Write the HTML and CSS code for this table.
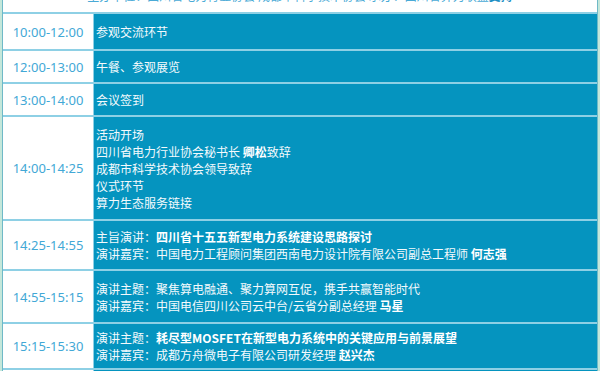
FILE: index.html
```html
<!DOCTYPE html>
<html lang="zh-CN">
<head>
<meta charset="utf-8">
<title>议程</title>
<link rel="stylesheet" href="styles.css">
</head>
<body>
<div class="page">
  <div class="schedule">
    <div class="head">主办单位：四川省电力行业协会 成都市科学技术协会 承办：四川省算力联盟 <b>支持</b></div>

    <div class="time">10:00-12:00</div>
    <div class="item"><p>参观交流环节</p></div>

    <div class="time">12:00-13:00</div>
    <div class="item"><p>午餐、参观展览</p></div>

    <div class="time">13:00-14:00</div>
    <div class="item"><p>会议签到</p></div>

    <div class="time">14:00-14:25</div>
    <div class="item">
      <p>活动开场</p>
      <p>四川省电力行业协会秘书长 <b>卿松</b>致辞</p>
      <p>成都市科学技术协会领导致辞</p>
      <p>仪式环节</p>
      <p>算力生态服务链接</p>
    </div>

    <div class="time">14:25-14:55</div>
    <div class="item">
      <p>主旨演讲：<b>四川省十五五新型电力系统建设思路探讨</b></p>
      <p>演讲嘉宾：中国电力工程顾问集团西南电力设计院有限公司副总工程师 <b>何志强</b></p>
    </div>

    <div class="time">14:55-15:15</div>
    <div class="item">
      <p>演讲主题：聚焦算电融通、聚力算网互促，携手共赢智能时代</p>
      <p>演讲嘉宾：中国电信四川公司云中台/云省分副总经理 <b>马星</b></p>
    </div>

    <div class="time">15:15-15:30</div>
    <div class="item">
      <p>演讲主题：<b>耗尽型MOSFET在新型电力系统中的关键应用与前景展望</b></p>
      <p>演讲嘉宾：成都方舟微电子有限公司研发经理 <b>赵兴杰</b></p>
    </div>

    <div class="time"></div>
    <div class="item"></div>
  </div>
</div>
</body>
</html>
```

FILE: styles.css
```css
html, body {
  margin: 0;
  padding: 0;
}

body {
  font-family: "Noto Sans CJK SC", "Noto Sans", sans-serif;
  background: #ffffff;
}

.page {
  width: 600px;
  height: 371px;
  overflow: hidden;
  display: flex;
  padding: 0 2px;
  box-sizing: border-box;
  background: #c4e7da;
}

.schedule {
  flex: 1;
  display: grid;
  grid-template-columns: 90px 1fr;
  grid-template-rows: 12px 35px 31px 31px 102px 48px 51px 44px 20px;
  row-gap: 2px;
  column-gap: 1px;
  border-left: 1px solid #6fb9c7;
  border-right: 1px solid #6fb9c7;
  background: #8ed0e5;
}

.head {
  grid-column: 1 / -1;
  background: #ffffff;
  color: #4aaad6;
  font-size: 12px;
  line-height: 17px;
  overflow: hidden;
  display: flex;
  align-items: flex-end;
  justify-content: center;
  padding-bottom: 8px;
  white-space: nowrap;
}

.head b {
  color: #1d8fc4;
}

.time {
  background: #ffffff;
  color: #42a8d6;
  font-family: "Noto Sans", "Noto Sans CJK SC", sans-serif;
  font-size: 13px;
  display: flex;
  align-items: center;
  justify-content: center;
}

.item {
  background: #0594bf;
  color: #f4fafd;
  font-size: 12px;
  line-height: 17px;
  display: flex;
  flex-direction: column;
  justify-content: center;
  padding-left: 2px;
}

.item p {
  margin: 0;
  white-space: nowrap;
}

.item b {
  font-weight: 700;
  color: #ffffff;
}
```
